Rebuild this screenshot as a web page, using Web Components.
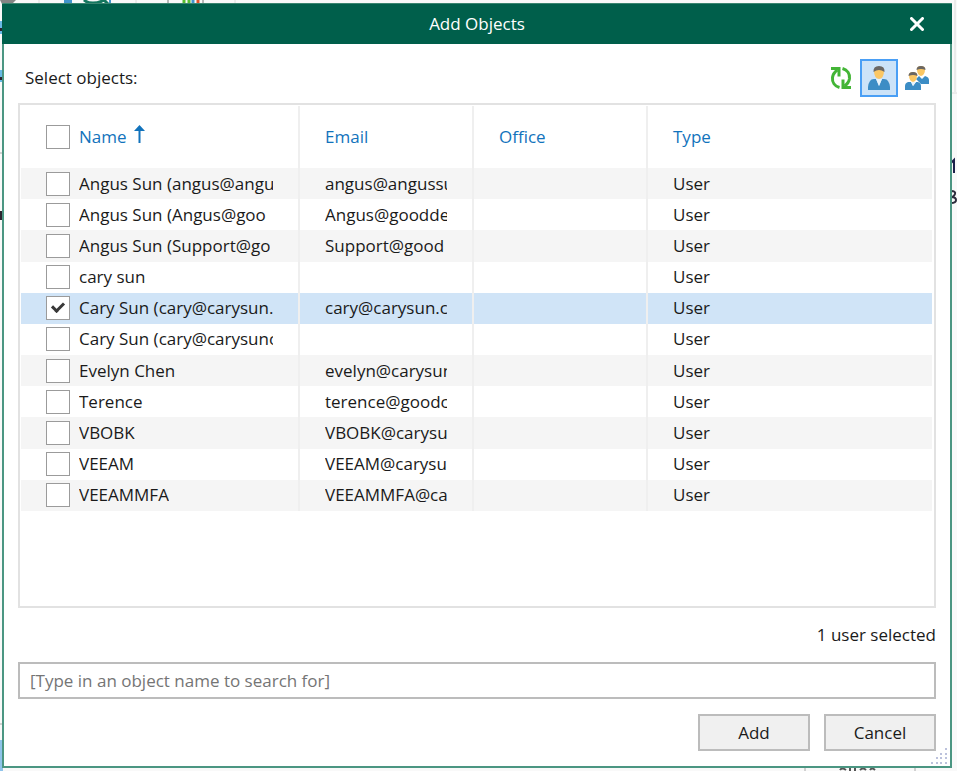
<!DOCTYPE html>
<html lang="en">
<head>
<meta charset="utf-8">
<title>Add Objects</title>
<style>
  html, body {
    height: 100%;
    margin: 0;
  }

  body {
    background-color: #f9f9f9;
    color: #1a1a1a;
    display: flex;
    flex-direction: column;
    font-family: 'Open Sans', 'Noto Sans', sans-serif;
    font-size: 17px;
    line-height: 24px;
    overflow: hidden;
  }
</style>
</head>
<body>
  <window-backdrop-component></window-backdrop-component>

  <dialog-window-component heading="Add Objects">
    <object-toolbar-component slot="toolbar"></object-toolbar-component>
    <object-table-component></object-table-component>
    <dialog-footer-component slot="footer"></dialog-footer-component>
  </dialog-window-component>

<script>
class WindowBackdrop extends HTMLElement {
  constructor () {
    super()
    this.shadow = this.attachShadow({ mode: 'open' })
  }

  connectedCallback () {
    this.render()
  }

  render () {
    this.shadow.innerHTML =
      /* html */`
      <style>
        :host {
          inset: 0;
          position: absolute;
        }

        svg {
          position: absolute;
        }

        .top { left: 0; top: 0; }
        .left { left: 0; top: 0; }
        .right { right: 0; top: 0; }
        .bottom { bottom: 0; right: 0; }
      </style>

      <svg class="top" width="320" height="4" aria-hidden="true">
        <path d="M0 0h16l-4 4H2z" fill="#858585"/>
        <path d="M39 0v4M136 0v4M235 0v4" stroke="#dcdcdc"/>
        <path d="M64 0h8v4h-8z" fill="#4295cc"/>
        <path d="M84 0q3 3 9 3t11-3l4 4" fill="none" stroke="#14775f" stroke-width="3"/>
        <path d="M110 0v3" stroke="#4295cc" stroke-width="2"/>
        <path d="M168 0v4M203 0v4" stroke="#777"/>
        <path d="M184 0v4M189 0v4" stroke="#57bd31" stroke-width="3"/>
        <path d="M193 0v4" stroke="#4295cc" stroke-width="3"/>
        <path d="M198 0v4" stroke="#e0522b" stroke-width="3"/>
      </svg>

      <svg class="left" width="3" height="771" aria-hidden="true">
        <path d="M0 21h3v13H0zM0 70h3v12H0z" fill="#69b9e6"/>
        <path d="M0 28h3v3H0zM0 77h3v3H0zM0 211h3v9H0z" fill="#2b2430"/>
        <path d="M0 153h3M0 724h3" stroke="#aaa"/>
        <path d="M0 740h3v31H0z" fill="#8fc3ea"/>
      </svg>

      <svg class="right" width="6" height="220" aria-hidden="true">
        <path d="M4 0v92M0 93h6" fill="none" stroke="#dcdcdc"/>
        <path d="M0 163l3-3v13" fill="none" stroke="#1d1f4a" stroke-width="2"/>
        <path d="M0 191q5 0 4 3t-4 3q5 0 5 3t-5 3" fill="none" stroke="#2d2b3c" stroke-width="2"/>
      </svg>

      <svg class="bottom" width="160" height="4" aria-hidden="true">
        <path d="M8 0v4M118 0v4" stroke="#aaa"/>
        <path d="M43 3q2-3 6 0M53 0v4M58 0v4M63 3q3-3 6 0M73 3q2-3 5 0" fill="none" stroke="#555" stroke-width="2"/>
      </svg>
    `
  }
}

customElements.define('window-backdrop-component', WindowBackdrop)

class DialogWindow extends HTMLElement {
  constructor () {
    super()
    this.shadow = this.attachShadow({ mode: 'open' })
  }

  connectedCallback () {
    this.render()
  }

  render () {
    this.shadow.innerHTML =
      /* html */`
      <style>
        :host {
          background-color: #fff;
          border: 2px solid #4b9682;
          border-top: 1px solid #3a8570;
          box-sizing: border-box;
          display: flex;
          flex: 1;
          flex-direction: column;
          margin: 3px 5px 3px 2px;
          position: relative;
        }

        header {
          align-items: center;
          background-color: #005f4b;
          color: #fff;
          display: grid;
          grid-template-columns: 1fr auto 1fr;
          height: 40px;
          margin: 0 -2px;
        }

        h1 {
          font-size: 17px;
          font-weight: 400;
          grid-column: 2;
          margin: 0;
        }

        .close {
          background: none;
          border: none;
          cursor: pointer;
          display: flex;
          justify-self: end;
          margin-right: 24px;
          padding: 4px;
        }

        main {
          display: flex;
          flex: 1;
          flex-direction: column;
          padding: 15px 14px;
        }

        .grip {
          bottom: 1px;
          position: absolute;
          right: 2px;
        }
      </style>

      <header>
        <h1>${this.getAttribute('heading')}</h1>
        <button class="close" aria-label="Close">
          <svg width="14" height="14" viewBox="0 0 14 14">
            <path d="M1.500 1.500l11 11M12.500 1.500l-11 11" stroke="#fff" stroke-width="3" stroke-linecap="round"/>
          </svg>
        </button>
      </header>
      <main>
        <slot name="toolbar"></slot>
        <slot></slot>
        <slot name="footer"></slot>
      </main>
      <svg class="grip" width="17" height="17" viewBox="0 0 17 17" fill="#bcc2dc" aria-hidden="true">
        <path d="M14 0h2v2h-2zM9 5h2v2H9zM14 5h2v2h-2zM5 9h2v2H5zM9 9h2v2H9zM14 9h2v2h-2zM0 14h2v2H0zM5 14h2v2H5zM9 14h2v2H9zM14 14h2v2h-2z"/>
      </svg>
    `
  }
}

customElements.define('dialog-window-component', DialogWindow)

class ObjectToolbar extends HTMLElement {
  constructor () {
    super()
    this.shadow = this.attachShadow({ mode: 'open' })
  }

  connectedCallback () {
    this.render()
  }

  render () {
    this.shadow.innerHTML =
      /* html */`
      <style>
        :host {
          align-items: center;
          display: flex;
          justify-content: space-between;
          padding-left: 7px;
        }

        .tools {
          display: flex;
        }

        button {
          align-items: center;
          background: none;
          border: 2px solid transparent;
          box-sizing: border-box;
          cursor: pointer;
          display: flex;
          height: 38px;
          justify-content: center;
          padding: 0;
          width: 38px;
        }

        button[aria-pressed="true"] {
          background-color: #cce3f8;
          border-color: #4a9ff5;
        }
      </style>

      <span>Select objects:</span>
      <div class="tools">
        <button aria-label="Refresh">
          <svg width="24" height="24" viewBox="0 0 24 24" fill="none" stroke="#43b536" stroke-width="3">
            <path d="M10.500 21.500C5.500 20 3 16 3.500 11.500 4 8 5.500 6 8.500 4"/>
            <path d="M13.500 2.500c5 1.500 7.500 5.500 7 10-.5 3.500-2 5.500-5 7.500"/>
            <path d="M2 2.500h8v8"/>
            <path d="M22 21.500h-8v-8"/>
          </svg>
        </button>
        <button aria-label="Users" aria-pressed="true">
          <svg width="24" height="26" viewBox="0 0 24 26">
            <path d="M1 25v-3q0-3 2-6 1-2 4-2h2l3 7 3-7h2q3 0 4 2 2 3 2 6v3z" fill="#3c8dc5"/>
            <path d="M9 14h6l-3 7z" fill="#e8f3fb"/>
            <path d="M7 6q0-4 5-4t5 4q0 7-5 8-5-1-5-8z" fill="#fbc763"/>
            <path d="M6.500 7Q6 1 12 1t5.500 6Q12 3 6.500 7z" fill="#6b6763"/>
          </svg>
        </button>
        <button aria-label="Groups" aria-pressed="false">
          <svg width="26" height="26" viewBox="0 0 26 26">
            <path d="M12 14l3-3 3 3 3-3q4 1 4 4v4h-8z" fill="#3c8dc5"/>
            <path d="M13 4q0-3 4-3t4 3q0 6-4 7-4-1-4-7z" fill="#fbc763"/>
            <path d="M12.500 5Q12.500 1 17 1t4.500 4Q17 3 12.500 5z" fill="#6b6763"/>
            <path d="M1 25v-4q0-3 3-4h3l2 4 3-4h2q3 1 3 4v4z" fill="#3c8dc5"/>
            <path d="M7 17h5l-3 4z" fill="#e8f3fb"/>
            <path d="M5 10q0-3 4-3t4 3q0 6-4 7-4-1-4-7z" fill="#fbc763"/>
            <path d="M4.500 11Q4.500 7 9 7t4.500 4Q9 9 4.500 11z" fill="#6b6763"/>
          </svg>
        </button>
      </div>
    `
  }
}

customElements.define('object-toolbar-component', ObjectToolbar)

class ObjectTable extends HTMLElement {
  constructor () {
    super()
    this.shadow = this.attachShadow({ mode: 'open' })
    this.objects = [
      { name: 'Angus Sun (angus@angu', email: 'angus@angussu' },
      { name: 'Angus Sun (Angus@goo', email: 'Angus@goodde' },
      { name: 'Angus Sun (Support@go', email: 'Support@good' },
      { name: 'cary sun', email: '' },
      { name: 'Cary Sun (cary@carysun.', email: 'cary@carysun.c', selected: true },
      { name: 'Cary Sun (cary@carysunc', email: '' },
      { name: 'Evelyn Chen', email: 'evelyn@carysun' },
      { name: 'Terence', email: 'terence@goodc' },
      { name: 'VBOBK', email: 'VBOBK@carysu' },
      { name: 'VEEAM', email: 'VEEAM@carysu' },
      { name: 'VEEAMMFA', email: 'VEEAMMFA@ca' }
    ]
  }

  connectedCallback () {
    this.render()
  }

  render () {
    const rows = this.objects.map(object => /* html */`
      <tr class="${object.selected ? 'selected' : ''}">
        <td>
          <label>
            <input type="checkbox" ${object.selected ? 'checked' : ''}>
            <span class="text">${object.name}</span>
          </label>
        </td>
        <td><div class="text">${object.email}</div></td>
        <td></td>
        <td>User</td>
      </tr>
    `).join('')

    this.shadow.innerHTML =
      /* html */`
      <style>
        :host {
          border: 2px solid #e2e2e2;
          display: block;
          flex: 1;
          margin-top: 6px;
          padding: 1px 2px 1px 1px;
        }

        table {
          border-collapse: collapse;
          height: 405px;
          table-layout: fixed;
          width: 100%;
        }

        th, td {
          border-right: 2px solid #efefef;
          box-sizing: border-box;
          font-weight: 400;
          height: 31px;
          padding: 0 25px;
          text-align: left;
        }

        th {
          color: #1273bc;
          height: 62px;
        }

        th:last-child, td:last-child {
          border-right: none;
        }

        .name { width: 278px; }
        .email, .office { width: 174px; }

        tbody tr:nth-child(odd) {
          background-color: #f5f5f5;
        }

        tbody tr.selected {
          background-color: #d0e4f7;
        }

        label, .heading {
          align-items: center;
          display: flex;
          gap: 9px;
        }

        .text {
          overflow: hidden;
          white-space: nowrap;
        }

        input {
          appearance: none;
          background-color: #fff;
          border: 1px solid #9b9b9b;
          box-sizing: border-box;
          display: grid;
          flex: none;
          height: 24px;
          margin: 0;
          place-content: center;
          width: 24px;
        }

        input:checked::before {
          border: solid #383838;
          border-width: 0 0 3px 3px;
          box-sizing: border-box;
          content: '';
          height: 8px;
          margin-bottom: 4px;
          transform: rotate(-45deg);
          width: 12px;
        }

        .sort {
          align-items: flex-start;
          background: none;
          border: none;
          color: inherit;
          cursor: pointer;
          display: flex;
          font: inherit;
          gap: 7px;
          padding: 0;
        }
      </style>

      <table>
        <thead>
          <tr>
            <th class="name">
              <div class="heading">
                <input type="checkbox" aria-label="Select all">
                <button class="sort">Name
                  <svg width="11" height="18" viewBox="0 0 11 18" aria-hidden="true">
                    <path d="M5.500 0L11 6H6.500v12h-2V6H0z" fill="#1273bc"/>
                  </svg>
                </button>
              </div>
            </th>
            <th class="email"><button class="sort">Email</button></th>
            <th class="office"><button class="sort">Office</button></th>
            <th><button class="sort">Type</button></th>
          </tr>
        </thead>
        <tbody>${rows}</tbody>
      </table>
    `
  }
}

customElements.define('object-table-component', ObjectTable)

class DialogFooter extends HTMLElement {
  constructor () {
    super()
    this.shadow = this.attachShadow({ mode: 'open' })
  }

  connectedCallback () {
    this.render()
  }

  render () {
    this.shadow.innerHTML =
      /* html */`
      <style>
        :host {
          display: flex;
          flex-direction: column;
          gap: 15px;
          padding-top: 15px;
        }

        .status {
          text-align: right;
        }

        input {
          border: 2px solid #bcbcbc;
          box-sizing: border-box;
          color: inherit;
          font: inherit;
          height: 37px;
          padding: 0 10px;
          width: 100%;
        }

        input::placeholder {
          color: #757575;
          opacity: 1;
        }

        .actions {
          display: flex;
          gap: 14px;
          justify-content: flex-end;
        }

        button {
          background-color: #f0f0f0;
          border: 2px solid #bcbcbc;
          box-sizing: border-box;
          color: inherit;
          cursor: pointer;
          font: inherit;
          height: 37px;
          padding: 0;
          width: 112px;
        }
      </style>

      <div class="status">1 user selected</div>
      <input type="text" aria-label="Search objects" placeholder="[Type in an object name to search for]">
      <div class="actions">
        <button>Add</button>
        <button>Cancel</button>
      </div>
    `
  }
}

customElements.define('dialog-footer-component', DialogFooter)
</script>
</body>
</html>
